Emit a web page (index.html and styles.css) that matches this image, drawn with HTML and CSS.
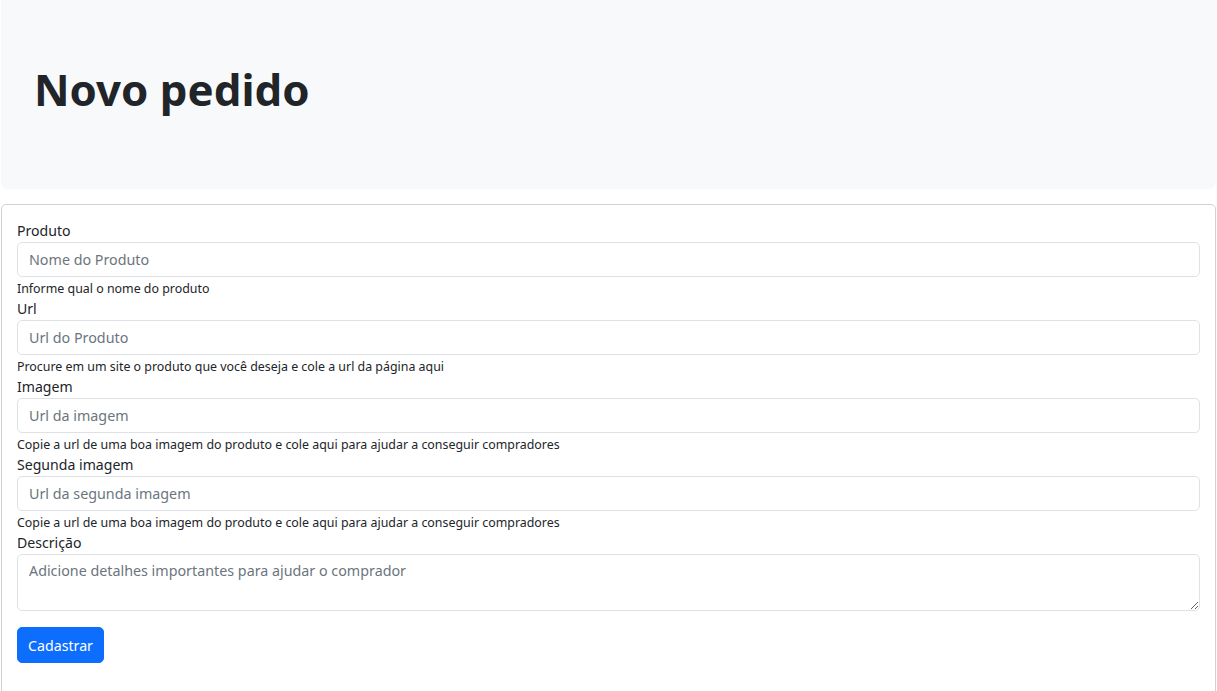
FILE: index.html
```html
<!DOCTYPE html>
<html lang="pt-BR">
<head>
<meta charset="utf-8">
<title>Novo pedido</title>
<link rel="stylesheet" href="styles.css">
</head>
<body>
<div class="page">
  <header class="hero">
    <h1 class="hero-title">Novo pedido</h1>
  </header>
  <section class="card">
    <form class="form">
      <div class="field">
        <label class="label" for="produto">Produto</label>
        <input class="control" id="produto" type="text" placeholder="Nome do Produto">
        <div class="help">Informe qual o nome do produto</div>
      </div>
      <div class="field">
        <label class="label" for="url">Url</label>
        <input class="control" id="url" type="text" placeholder="Url do Produto">
        <div class="help">Procure em um site o produto que você deseja e cole a url da página aqui</div>
      </div>
      <div class="field">
        <label class="label" for="imagem">Imagem</label>
        <input class="control" id="imagem" type="text" placeholder="Url da imagem">
        <div class="help">Copie a url de uma boa imagem do produto e cole aqui para ajudar a conseguir compradores</div>
      </div>
      <div class="field">
        <label class="label" for="imagem2">Segunda imagem</label>
        <input class="control" id="imagem2" type="text" placeholder="Url da segunda imagem">
        <div class="help">Copie a url de uma boa imagem do produto e cole aqui para ajudar a conseguir compradores</div>
      </div>
      <div class="field">
        <label class="label" for="descricao">Descrição</label>
        <textarea class="control textarea" id="descricao" rows="2" placeholder="Adicione detalhes importantes para ajudar o comprador"></textarea>
      </div>
      <div class="actions">
        <button class="btn" type="button">Cadastrar</button>
      </div>
    </form>
  </section>
</div>
</body>
</html>
```

FILE: styles.css
```css
* { box-sizing: border-box; }

html, body {
  margin: 0;
  padding: 0;
  background: #ffffff;
}

body {
  font-family: "Noto Sans", "Open Sans", sans-serif;
  color: #212529;
  font-size: 14.4px;
  line-height: 1.5;
}

.page {
  padding: 0 1px;
}

.hero {
  background: #f8f9fa;
  height: 189px;
  border-radius: 0 0 7px 7px;
  padding: 60px 33px 0;
  margin-bottom: 15px;
}

.hero-title {
  margin: 0;
  font-size: 43.8px;
  font-weight: 700;
  line-height: 58px;
  color: #212529;
}

.card {
  border: 1px solid #cfd1d3;
  border-radius: 5px;
  padding: 15px 15px 40px 15px;
}

.form {
  display: flex;
  flex-direction: column;
}

.field {
  display: flex;
  flex-direction: column;
}

.label {
  font-size: 14.1px;
  line-height: 22px;
  height: 22px;
  color: #212529;
}

.control {
  display: block;
  width: 100%;
  height: 35px;
  margin: 0;
  padding: 0 11px;
  font-family: inherit;
  font-size: 14.3px;
  color: #212529;
  background: #fff;
  border: 1px solid #dee2e6;
  border-radius: 5px;
  outline: none;
}

.control::placeholder {
  color: #6c757d;
  opacity: 1;
}

.textarea {
  height: 57px;
  padding: 5px 11px;
  line-height: 22px;
  resize: vertical;
}

.help {
  margin-top: 3px;
  font-size: 12.4px;
  line-height: 18px;
  height: 18px;
  color: #212529;
}

.actions {
  margin-top: 16px;
}

.btn {
  display: inline-block;
  width: 87px;
  height: 36px;
  padding: 0;
  font-family: inherit;
  font-size: 14.2px;
  color: #fff;
  background: #0d6efd;
  border: 1px solid #0d6efd;
  border-radius: 5px;
}
```
